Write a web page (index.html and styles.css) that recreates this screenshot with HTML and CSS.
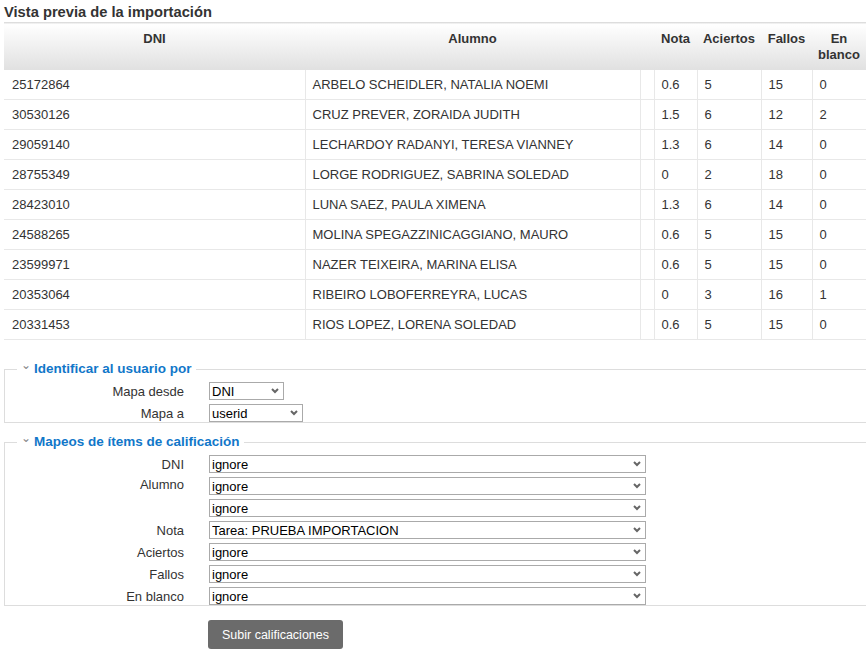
FILE: index.html
```html
<!DOCTYPE html>
<html lang="es">
<head>
    <meta charset="UTF-8">
    <title>Vista previa de la importación</title>
    <link rel="stylesheet" href="styles.css">
</head>
<body>
    <div class="page">
        <h2 class="title">Vista previa de la importación</h2>

        <table class="preview">
            <colgroup>
                <col class="c-dni">
                <col class="c-alumno">
                <col class="c-empty">
                <col class="c-nota">
                <col class="c-aciertos">
                <col class="c-fallos">
                <col class="c-blanco">
            </colgroup>
            <thead>
                <tr>
                    <th>DNI</th>
                    <th>Alumno</th>
                    <th></th>
                    <th>Nota</th>
                    <th>Aciertos</th>
                    <th>Fallos</th>
                    <th>En blanco</th>
                </tr>
            </thead>
            <tbody>
                <tr><td>25172864</td><td>ARBELO SCHEIDLER, NATALIA NOEMI</td><td></td><td>0.6</td><td>5</td><td>15</td><td>0</td></tr>
                <tr><td>30530126</td><td>CRUZ PREVER, ZORAIDA JUDITH</td><td></td><td>1.5</td><td>6</td><td>12</td><td>2</td></tr>
                <tr><td>29059140</td><td>LECHARDOY RADANYI, TERESA VIANNEY</td><td></td><td>1.3</td><td>6</td><td>14</td><td>0</td></tr>
                <tr><td>28755349</td><td>LORGE RODRIGUEZ, SABRINA SOLEDAD</td><td></td><td>0</td><td>2</td><td>18</td><td>0</td></tr>
                <tr><td>28423010</td><td>LUNA SAEZ, PAULA XIMENA</td><td></td><td>1.3</td><td>6</td><td>14</td><td>0</td></tr>
                <tr><td>24588265</td><td>MOLINA SPEGAZZINICAGGIANO, MAURO</td><td></td><td>0.6</td><td>5</td><td>15</td><td>0</td></tr>
                <tr><td>23599971</td><td>NAZER TEIXEIRA, MARINA ELISA</td><td></td><td>0.6</td><td>5</td><td>15</td><td>0</td></tr>
                <tr><td>20353064</td><td>RIBEIRO LOBOFERREYRA, LUCAS</td><td></td><td>0</td><td>3</td><td>16</td><td>1</td></tr>
                <tr><td>20331453</td><td>RIOS LOPEZ, LORENA SOLEDAD</td><td></td><td>0.6</td><td>5</td><td>15</td><td>0</td></tr>
            </tbody>
        </table>

        <!-- Identificar al usuario -->
        <fieldset class="group">
            <legend><span class="chevron">&#8964;</span>Identificar al usuario por</legend>
            <div class="row">
                <label class="label">Mapa desde</label>
                <span class="select-wrap sel-short">
                    <select class="sel"><option>DNI</option></select>
                    <svg class="arrow" width="8" height="6" viewBox="0 0 8 6"><polyline points="1,1 4,4 7,1" fill="none" stroke="#666" stroke-width="2"/></svg>
                </span>
            </div>
            <div class="row">
                <label class="label">Mapa a</label>
                <span class="select-wrap sel-mid">
                    <select class="sel"><option>userid</option></select>
                    <svg class="arrow" width="8" height="6" viewBox="0 0 8 6"><polyline points="1,1 4,4 7,1" fill="none" stroke="#666" stroke-width="2"/></svg>
                </span>
            </div>
        </fieldset>

        <!-- Mapeos -->
        <fieldset class="group">
            <legend><span class="chevron">&#8964;</span>Mapeos de ítems de calificación</legend>
            <div class="row">
                <label class="label">DNI</label>
                <span class="select-wrap sel-wide">
                    <select class="sel"><option>ignore</option></select>
                    <svg class="arrow" width="8" height="6" viewBox="0 0 8 6"><polyline points="1,1 4,4 7,1" fill="none" stroke="#666" stroke-width="2"/></svg>
                </span>
            </div>
            <div class="row">
                <label class="label label-up">Alumno</label>
                <span class="select-wrap sel-wide">
                    <select class="sel"><option>ignore</option></select>
                    <svg class="arrow" width="8" height="6" viewBox="0 0 8 6"><polyline points="1,1 4,4 7,1" fill="none" stroke="#666" stroke-width="2"/></svg>
                </span>
            </div>
            <div class="row">
                <label class="label"></label>
                <span class="select-wrap sel-wide">
                    <select class="sel"><option>ignore</option></select>
                    <svg class="arrow" width="8" height="6" viewBox="0 0 8 6"><polyline points="1,1 4,4 7,1" fill="none" stroke="#666" stroke-width="2"/></svg>
                </span>
            </div>
            <div class="row">
                <label class="label">Nota</label>
                <span class="select-wrap sel-wide">
                    <select class="sel"><option>Tarea: PRUEBA IMPORTACION</option></select>
                    <svg class="arrow" width="8" height="6" viewBox="0 0 8 6"><polyline points="1,1 4,4 7,1" fill="none" stroke="#666" stroke-width="2"/></svg>
                </span>
            </div>
            <div class="row">
                <label class="label">Aciertos</label>
                <span class="select-wrap sel-wide">
                    <select class="sel"><option>ignore</option></select>
                    <svg class="arrow" width="8" height="6" viewBox="0 0 8 6"><polyline points="1,1 4,4 7,1" fill="none" stroke="#666" stroke-width="2"/></svg>
                </span>
            </div>
            <div class="row">
                <label class="label">Fallos</label>
                <span class="select-wrap sel-wide">
                    <select class="sel"><option>ignore</option></select>
                    <svg class="arrow" width="8" height="6" viewBox="0 0 8 6"><polyline points="1,1 4,4 7,1" fill="none" stroke="#666" stroke-width="2"/></svg>
                </span>
            </div>
            <div class="row">
                <label class="label">En blanco</label>
                <span class="select-wrap sel-wide">
                    <select class="sel"><option>ignore</option></select>
                    <svg class="arrow" width="8" height="6" viewBox="0 0 8 6"><polyline points="1,1 4,4 7,1" fill="none" stroke="#666" stroke-width="2"/></svg>
                </span>
            </div>
        </fieldset>

        <div class="actions">
            <button class="submit">Subir calificaciones</button>
        </div>
    </div>
</body>
</html>
```

FILE: styles.css
```css
/* Base */
html, body {
    margin: 0;
    overflow: hidden;
    background: #fff;
}

body {
    font-family: "Liberation Sans", Arial, sans-serif;
    font-size: 13px;
    color: #333;
}

.page {
    width: 900px;
    padding: 2px 0 0 4px;
}

.title {
    margin: 0;
    font-size: 14.7px;
    line-height: 20px;
    font-weight: bold;
    color: #333;
}

/* Preview table */
.preview {
    width: 862px;
    table-layout: fixed;
    border-collapse: collapse;
    border-top: 1px solid #ddd;
}

.c-dni { width: 301px; }
.c-alumno { width: 335px; }
.c-empty { width: 14px; }
.c-nota { width: 43px; }
.c-aciertos { width: 64px; }
.c-fallos { width: 51px; }
.c-blanco { width: 54px; }

.preview th {
    height: 47px;
    padding: 8px 0 0;
    vertical-align: top;
    text-align: center;
    font-weight: bold;
    line-height: 16px;
    color: #333;
    background: linear-gradient(to bottom, #fff, #e0e0e0);
    box-sizing: border-box;
}

.preview td {
    height: 30px;
    padding: 0 0 0 7px;
    border: 1px solid #e8e8e8;
    border-top: none;
    white-space: nowrap;
    overflow: hidden;
    box-sizing: border-box;
}

.preview td:first-child {
    border-left: none;
    padding-left: 8px;
}

.preview td:last-child {
    border-right: none;
}

/* Fieldsets */
.group {
    margin: 21px 0 0;
    padding: 5px 0 0;
    border: none;
    border-top: 1px solid #ddd;
    border-left: 1px solid #ddd;
    border-bottom: 1px solid #ddd;
    min-width: 0;
}

.group + .group {
    margin-top: 11px;
}

.group legend {
    margin-left: 12px;
    padding: 0 4px;
    font-weight: bold;
    font-size: 13.5px;
    line-height: 16px;
    color: #1177c9;
}

.chevron {
    display: inline-block;
    width: 12px;
    margin-right: 1px;
    color: #888;
    font-weight: normal;
    font-size: 12px;
    position: relative;
    top: -4px;
}

.row {
    display: flex;
    align-items: center;
    height: 18px;
}

.row + .row {
    margin-top: 4px;
}

.label {
    width: 179px;
    text-align: right;
    color: #333;
    margin-right: 25px;
}

.label-up {
    position: relative;
    top: -2px;
}

/* Selects */
.select-wrap {
    position: relative;
    display: inline-block;
    height: 18px;
}

.sel {
    -webkit-appearance: none;
    appearance: none;
    width: 100%;
    height: 18px;
    padding: 1px 12px 0 2px;
    border: 1px solid #aaa;
    border-radius: 0;
    background: #fff;
    color: #000;
    font-family: "Liberation Sans", Arial, sans-serif;
    font-size: 13px;
    line-height: 16px;
    box-sizing: border-box;
}

.arrow {
    position: absolute;
    right: 5px;
    top: 6px;
    pointer-events: none;
}

.sel-short { width: 75px; }
.sel-mid { width: 94px; }
.sel-wide { width: 437px; }

/* Submit */
.actions {
    padding: 14px 0 0 204px;
}

.submit {
    width: 135px;
    height: 29px;
    border: none;
    border-radius: 3px;
    background: #6b6b6b;
    color: #fff;
    font-family: "Liberation Sans", Arial, sans-serif;
    font-size: 12.5px;
}
```
